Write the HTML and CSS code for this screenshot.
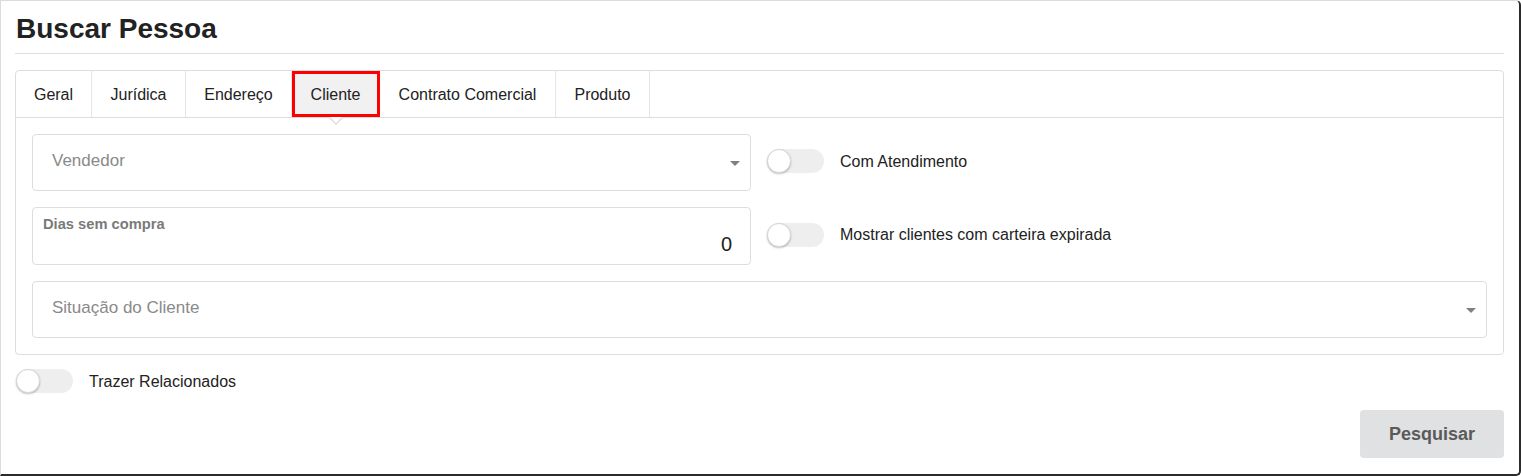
FILE: index.html
```html
<!DOCTYPE html>
<html lang="pt-BR">
<head>
<meta charset="utf-8">
<title>Buscar Pessoa</title>
<link rel="stylesheet" href="styles.css">
</head>
<body>
<div class="frame">
  <h1 class="title">Buscar Pessoa</h1>

  <div class="panel">
    <div class="tabs">
      <div class="tab tab-geral">Geral</div>
      <div class="tab tab-juridica">Jurídica</div>
      <div class="tab tab-endereco">Endereço</div>
      <div class="tab tab-cliente active">Cliente</div>
      <div class="tab tab-contrato">Contrato Comercial</div>
      <div class="tab tab-produto">Produto</div>
    </div>
    <div class="panel-body">
      <div class="grid">
        <div class="field select">
          <span class="placeholder">Vendedor</span>
          <span class="caret"></span>
        </div>
        <div class="switch-row">
          <span class="switch"><span class="knob"></span></span>
          <span class="switch-label">Com Atendimento</span>
        </div>
        <div class="field number">
          <span class="field-label">Dias sem compra</span>
          <span class="value">0</span>
        </div>
        <div class="switch-row">
          <span class="switch"><span class="knob"></span></span>
          <span class="switch-label">Mostrar clientes com carteira expirada</span>
        </div>
        <div class="field select wide">
          <span class="placeholder">Situação do Cliente</span>
          <span class="caret"></span>
        </div>
      </div>
    </div>
  </div>

  <div class="switch-row related">
    <span class="switch"><span class="knob"></span></span>
    <span class="switch-label">Trazer Relacionados</span>
  </div>

  <div class="actions">
    <button class="btn" type="button">Pesquisar</button>
  </div>
</div>
</body>
</html>
```

FILE: styles.css
```css
* { box-sizing: border-box; }

html, body {
  margin: 0;
  padding: 0;
  background: #ffffff;
}

body {
  font-family: "Liberation Sans", Arial, sans-serif;
  color: #222222;
}

.frame {
  width: 1521px;
  height: 476px;
  border-top: 1px solid #dcdcdc;
  border-left: 1px solid #dcdcdc;
  border-right: 2px solid #2b2b2b;
  border-bottom: 2px solid #2b2b2b;
  border-radius: 0 5px 5px 0;
  padding: 0 15px 0 14px;
  overflow: hidden;
}

.title {
  margin: 0;
  padding: 11px 0 7px 1px;
  font-size: 28px;
  line-height: 34px;
  font-weight: bold;
  color: #222222;
  border-bottom: 1px solid #dddddd;
}

.panel {
  margin-top: 16px;
  border: 1px solid #dddddd;
  border-radius: 4px;
}

.tabs {
  display: flex;
  height: 47px;
  border-bottom: 1px solid #dddddd;
}

.tab {
  position: relative;
  padding: 2px 0 0 0;
  height: 46px;
  line-height: 44px;
  font-size: 16px;
  color: #222222;
  text-align: center;
  border-right: 1px solid #e6e6e6;
}

.tab-geral { width: 76px; }
.tab-juridica { width: 94px; }
.tab-endereco { width: 106px; }
.tab-cliente { width: 88px; }
.tab-contrato { width: 176px; }
.tab-produto { width: 94px; }

.tab.active {
  background: #f1f1f1;
  outline: 3px solid #ff0000;
  outline-offset: -3px;
}

.tab.active::before {
  content: "";
  position: absolute;
  left: 50%;
  bottom: -8px;
  margin-left: -7px;
  border-left: 7px solid transparent;
  border-right: 7px solid transparent;
  border-top: 7px solid #dddddd;
}

.tab.active::after {
  content: "";
  position: absolute;
  left: 50%;
  bottom: -6px;
  margin-left: -6px;
  border-left: 6px solid transparent;
  border-right: 6px solid transparent;
  border-top: 6px solid #ffffff;
}

.panel-body {
  padding: 16px;
}

.grid {
  display: grid;
  grid-template-columns: 719px 1fr;
  column-gap: 16px;
  row-gap: 16px;
}

.field {
  height: 57px;
  border: 1px solid #dddddd;
  border-radius: 4px;
  background: #ffffff;
}

.field.select {
  display: flex;
  align-items: center;
  justify-content: space-between;
  padding: 0 10px 3px 19px;
}

.field.wide {
  grid-column: 1 / 3;
}

.placeholder {
  font-size: 17px;
  color: #8a8a8a;
}

.caret {
  width: 0;
  height: 0;
  border-left: 5px solid transparent;
  border-right: 5px solid transparent;
  border-top: 5px solid #808080;
  margin-top: 5px;
}

.field.number {
  height: 58px;
  display: flex;
  flex-direction: column;
  padding: 8px 18px 0 10px;
}

.field-label {
  font-size: 14.7px;
  font-weight: bold;
  color: #7a7a7a;
  line-height: 17px;
}

.value {
  align-self: flex-end;
  font-size: 20px;
  line-height: 22px;
  margin-top: 0;
  color: #222222;
}

.switch-row {
  display: flex;
  align-items: center;
  gap: 16px;
}

.grid .switch-row {
  margin-top: -3px;
}

.switch {
  display: flex;
  align-items: center;
  width: 57px;
  height: 24px;
  border-radius: 12px;
  background: #eeeeee;
  flex: 0 0 auto;
}

.knob {
  width: 24px;
  height: 24px;
  border-radius: 50%;
  background: #ffffff;
  border: 1px solid #d6d6d6;
  box-shadow: 0 1px 2px rgba(0, 0, 0, 0.25);
}

.switch-label {
  font-size: 16px;
  color: #222222;
}

.grid .switch-label {
  margin-top: 1px;
}

.related {
  margin-top: 14px;
  margin-left: 1px;
}

.related .switch-label {
  margin-top: 2px;
}

.actions {
  display: flex;
  justify-content: flex-end;
  margin-top: 17px;
}

.btn {
  width: 144px;
  height: 48px;
  border: none;
  border-radius: 4px;
  background: #e0e1e2;
  font-family: "Liberation Sans", Arial, sans-serif;
  font-size: 18px;
  font-weight: bold;
  color: #5a5a5a;
  padding: 0;
}
```
